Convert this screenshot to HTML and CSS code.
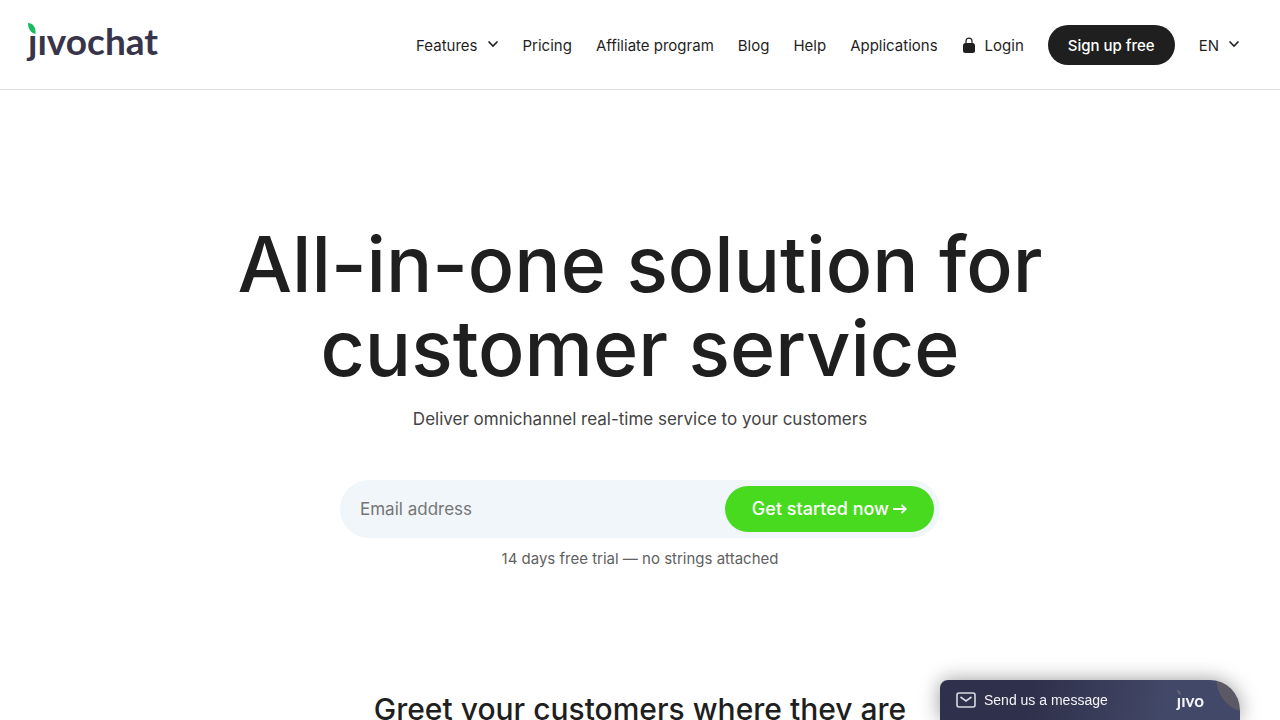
FILE: index.html
```
<!DOCTYPE html>
<html lang="en">
<head>
    <meta charset="UTF-8">
    <meta name="viewport" content="width=device-width, initial-scale=1.0">
    <title>JivoChat</title>
    <link rel="stylesheet" href="styles.css">
</head>
<body>
    <header class="header">
        <a class="logo" href="#" aria-label="jivochat">
            <svg class="logo-leaf" viewBox="0 0 8 11" aria-hidden="true"><path d="M0 0C5 0 8 4 7.500 11C3 10 0 6 0 0Z"/></svg>
            <span>ȷıvochat</span>
        </a>
        <nav class="nav">
            <button class="nav-item" type="button">Features
                <svg class="chevron" viewBox="0 0 12 12" aria-hidden="true"><path d="M1.500 3.500L6 8L10.500 3.500"/></svg>
            </button>
            <a class="nav-item" href="#">Pricing</a>
            <a class="nav-item" href="#">Affiliate program</a>
            <a class="nav-item" href="#">Blog</a>
            <a class="nav-item" href="#">Help</a>
            <a class="nav-item" href="#">Applications</a>
            <a class="nav-item" href="#">
                <svg class="lock" viewBox="0 0 14 16" aria-hidden="true"><rect x="1" y="6" width="12" height="10" rx="2.500"/><path d="M4 7V4.200a3 3 0 0 1 6 0V7"/></svg>
                Login
            </a>
            <a class="signup" href="#">Sign up free</a>
            <button class="nav-item" type="button">EN
                <svg class="chevron" viewBox="0 0 12 12" aria-hidden="true"><path d="M1.500 3.500L6 8L10.500 3.500"/></svg>
            </button>
        </nav>
    </header>

    <main>
        <section class="hero">
            <h1>All-in-one solution for<br>customer service</h1>
            <p class="lead">Deliver omnichannel real-time service to your customers</p>
            <form class="signup-form">
                <input type="email" placeholder="Email address" aria-label="Email address">
                <button type="submit">Get started now
                    <svg class="arrow" viewBox="0 0 14 12" aria-hidden="true"><path d="M0 6H12.500M8.500 2L12.800 6L8.500 10"/></svg>
                </button>
            </form>
            <p class="note">14 days free trial — no strings attached</p>
        </section>
        <section class="channels">
            <h2>Greet your customers where they are</h2>
        </section>
    </main>

    <button class="chat" type="button">
        <svg class="envelope" viewBox="0 0 20 16" aria-hidden="true"><rect x="1" y="1" width="18" height="14" rx="2"/><path d="M4.500 5L10 9L15.500 5"/></svg>
        <span>Send us a message</span>
        <span class="chat-brand">
            <svg class="chat-leaf" viewBox="0 0 8 11" aria-hidden="true"><path d="M0 0C5 0 8 4 7.500 11C3 10 0 6 0 0Z"/></svg>
            ȷıvo
        </span>
    </button>
</body>
</html>
```
FILE: styles.css
```
:root {
    --ink: #1f1f1f;
    --logo: #38354b;
    --green: #48da1e;
    --field: #f0f6fa;
}

* {
    box-sizing: border-box;
}

body {
    margin: 0;
    background: #fff;
    color: var(--ink);
    font-family: Inter, "Liberation Sans", sans-serif;
}

h1,
h2,
p {
    margin: 0;
}

a {
    color: inherit;
    text-decoration: none;
}

button {
    border: none;
    background: none;
    color: inherit;
    font-family: inherit;
    cursor: pointer;
}

.header {
    display: flex;
    justify-content: space-between;
    align-items: center;
    height: 90px;
    padding: 0 40px 0 28px;
    border-bottom: 1px solid #dcdcdc;
}

.logo {
    position: relative;
    padding-bottom: 8px;
    color: var(--logo);
    font-family: Lato, sans-serif;
    font-size: 37px;
    font-weight: 700;
    line-height: 36px;
}

.logo-leaf {
    position: absolute;
    top: 0;
    left: 0;
    width: 8px;
    height: 11px;
    fill: #17bd5e;
}

.nav {
    display: flex;
    align-items: center;
    gap: 24px;
}

.nav-item {
    display: flex;
    align-items: center;
    gap: 9px;
    padding: 2px 0 0;
    font-size: 15px;
    line-height: 24px;
}

.chevron {
    width: 12px;
    height: 12px;
    margin-bottom: 4px;
    fill: none;
    stroke: currentColor;
    stroke-width: 1.6;
}

.lock {
    width: 14px;
    height: 16px;
    margin-bottom: 2px;
    fill: currentColor;
}

.lock path {
    fill: none;
    stroke: currentColor;
    stroke-width: 1.2;
}

.signup {
    padding: 2px 20px 0;
    border-radius: 20px;
    background: var(--ink);
    color: #fff;
    font-size: 15px;
    font-weight: 500;
    line-height: 38px;
}

.hero {
    display: flex;
    flex-direction: column;
    align-items: center;
    padding: 132px 20px 0;
    text-align: center;
}

h1 {
    font-size: 77px;
    font-weight: 500;
    line-height: 84px;
}

.lead {
    margin-top: 16px;
    color: #444;
    font-size: 17px;
    line-height: 26px;
}

.signup-form {
    display: flex;
    width: 100%;
    max-width: 600px;
    margin-top: 48px;
    padding: 6px;
    border-radius: 30px;
    background: var(--field);
}

.signup-form input {
    flex: 1;
    min-width: 0;
    padding: 0 14px;
    border: none;
    outline: none;
    background: transparent;
    color: var(--ink);
    font-family: inherit;
    font-size: 17px;
}

.signup-form input::placeholder {
    color: #757575;
}

.signup-form button {
    display: flex;
    align-items: center;
    gap: 4px;
    padding: 0 27px;
    border-radius: 23px;
    background: var(--green);
    color: #fff;
    font-size: 18px;
    font-weight: 500;
    line-height: 46px;
}

.arrow {
    width: 14px;
    height: 12px;
    fill: none;
    stroke: currentColor;
    stroke-width: 1.8;
}

.note {
    margin-top: 10px;
    color: #616161;
    font-size: 15px;
    line-height: 22px;
}

.channels {
    padding: 118px 20px 60px;
    text-align: center;
}

h2 {
    font-size: 30px;
    font-weight: 500;
    line-height: 42px;
}

.chat {
    position: fixed;
    right: 40px;
    bottom: 0;
    display: flex;
    align-items: center;
    gap: 8px;
    width: 300px;
    height: 40px;
    padding: 0 36px 0 16px;
    border-radius: 8px 30px 0 0;
    background: radial-gradient(circle at 310px -1px, #5c5964 33px, transparent 34px), linear-gradient(100deg, #2f304b 30%, #424867 75%);
    box-shadow: 0 0 20px rgba(0, 0, 0, 0.4);
    color: #f4f4f8;
    font-family: "Liberation Sans", Arial, sans-serif;
    font-size: 14px;
}

.envelope {
    width: 20px;
    height: 16px;
    fill: none;
    stroke: #d8dae2;
    stroke-width: 1.6;
}

.chat-brand {
    position: relative;
    margin-left: auto;
    font-family: Lato, sans-serif;
    font-size: 17px;
    font-weight: 700;
}

.chat-leaf {
    position: absolute;
    top: 0;
    left: 0;
    width: 4px;
    height: 5px;
    fill: #686777;
}
```
